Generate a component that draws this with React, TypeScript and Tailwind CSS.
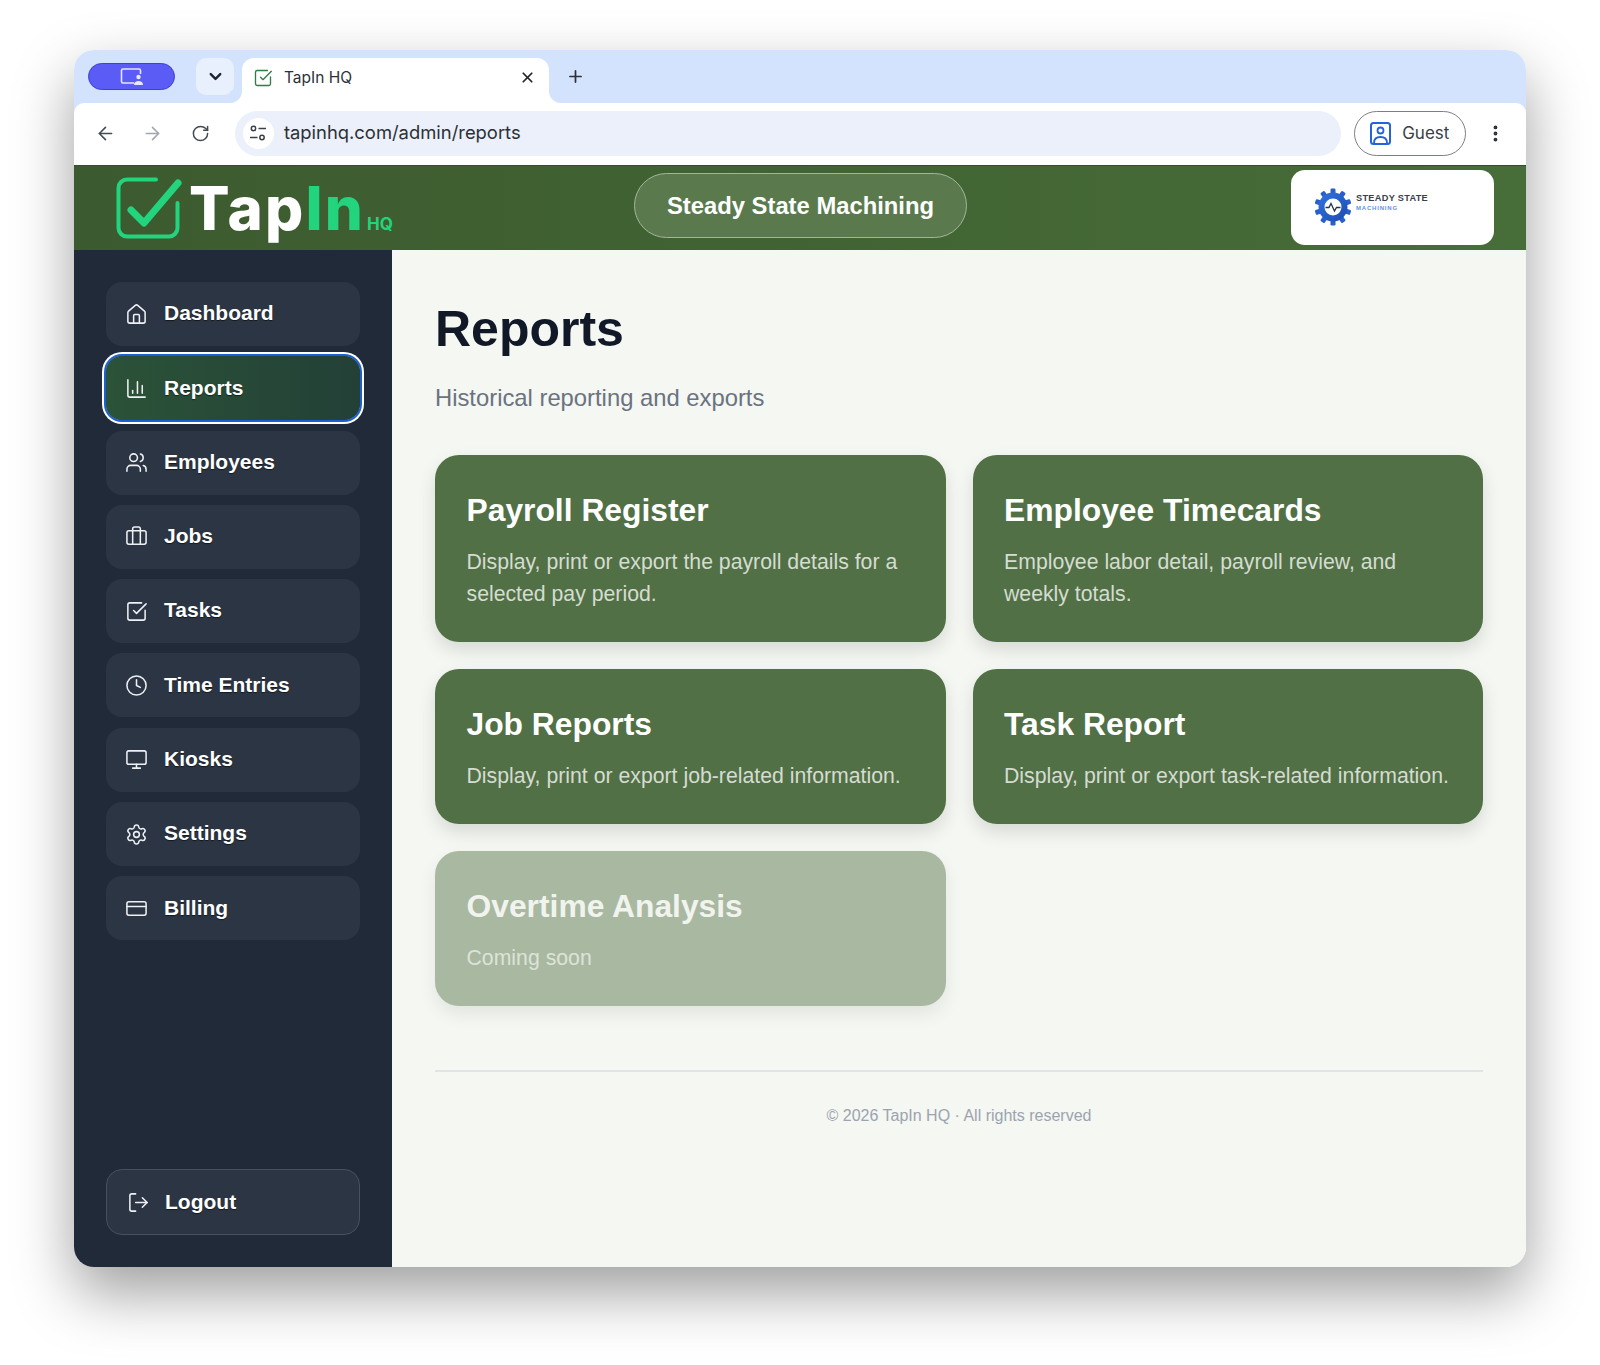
import { ArrowLeft, ArrowRight, Briefcase, ChartColumn, ChevronDown, Clock, CreditCard, EllipsisVertical, House, LogOut, Monitor, Plus, RotateCw, Settings, SquareCheckBig, Users, X } from 'lucide-react'

const navItems = [
  { label: 'Dashboard', icon: House },
  { label: 'Reports', icon: ChartColumn, active: true },
  { label: 'Employees', icon: Users },
  { label: 'Jobs', icon: Briefcase },
  { label: 'Tasks', icon: SquareCheckBig },
  { label: 'Time Entries', icon: Clock },
  { label: 'Kiosks', icon: Monitor },
  { label: 'Settings', icon: Settings },
  { label: 'Billing', icon: CreditCard },
]

const reports = [
  { title: 'Payroll Register', text: 'Display, print or export the payroll details for a selected pay period.' },
  { title: 'Employee Timecards', text: 'Employee labor detail, payroll review, and weekly totals.' },
  { title: 'Job Reports', text: 'Display, print or export job-related information.' },
  { title: 'Task Report', text: 'Display, print or export task-related information.' },
  { title: 'Overtime Analysis', text: 'Coming soon', disabled: true },
]

function TabStrip() {
  return (
    <div className="flex h-[53px] items-end bg-[#d3e3fd] pl-[14px]">
      {/* profile pill */}
      <div className="mb-[13px] flex h-[27px] w-[87px] items-center justify-center rounded-full border border-[#3f3fd0] bg-[#5b5bf6]">
        <svg width="26" height="20" viewBox="0 0 26 20" fill="none" stroke="#e8e8ff" strokeWidth="1.6">
          <path d="M15 16H4a1.5 1.5 0 0 1-1.5-1.5v-11A1.5 1.5 0 0 1 4 2h16a1.5 1.5 0 0 1 1.5 1.5V7" />
          <circle cx="19.5" cy="10" r="2.2" fill="#e8e8ff" stroke="none" />
          <path d="M15 18c0-3 2-4 4.500-4s4.500 1 4.500 4z" fill="#e8e8ff" stroke="none" />
        </svg>
      </div>
      <div className="mb-[8px] ml-[21px] flex h-[37px] w-[38px] items-center justify-center rounded-[10px] bg-[#e8effd]">
        <ChevronDown size={19} strokeWidth={3} className="text-[#1b2433]" />
      </div>
      {/* active tab */}
      <div className="relative ml-[8px] flex h-[45px] w-[307px] items-center rounded-t-[12px] bg-white pb-[6px] pl-[11px] pr-[14px]">
        <span className="absolute bottom-0 left-[-12px] h-3 w-3 bg-white">
          <span className="block h-3 w-3 rounded-br-[12px] bg-[#d3e3fd]" />
        </span>
        <span className="absolute bottom-0 right-[-12px] h-3 w-3 bg-white">
          <span className="block h-3 w-3 rounded-bl-[12px] bg-[#d3e3fd]" />
        </span>
        <SquareCheckBig size={20} strokeWidth={1.6} className="text-[#2f7d44]" />
        <span className="ml-[11px] font-['Inter',sans-serif] text-[15.5px] text-[#2c3138]">TapIn HQ</span>
        <X size={17} strokeWidth={2.4} className="ml-auto mr-[-1px] text-[#20242b]" />
      </div>
      <Plus size={19} strokeWidth={2.2} className="mb-[17px] ml-[17px] text-[#2c3138]" />
    </div>
  )
}

function Toolbar() {
  return (
    <div className="bg-[#d3e3fd]">
      <div className="flex h-[63px] items-center rounded-t-[10px] border-b border-[#3a4a34] bg-white pb-[2px] pl-[21px] pr-[20px]">
        <ArrowLeft size={21} strokeWidth={1.8} className="text-[#444a52]" />
        <ArrowRight size={21} strokeWidth={1.8} className="ml-[26px] text-[#a3a7ad]" />
        <RotateCw size={19} strokeWidth={1.9} className="ml-[28px] text-[#444a52]" />
        <div className="ml-[25px] flex h-[45px] w-[1108px] items-center rounded-full bg-[#ebf0fa] pl-[8px]">
          <div className="flex h-[31px] w-[31px] items-center justify-center rounded-full bg-white">
            <svg width="18" height="18" viewBox="0 0 18 18" fill="none" stroke="#3a4048" strokeWidth="1.5">
              <circle cx="4.500" cy="4.500" r="2.200" />
              <path d="M9.500 4.500H17M1 13.500h7.500" />
              <circle cx="13" cy="13.500" r="2.200" />
            </svg>
          </div>
          <span className="ml-[10px] font-['Inter',sans-serif] text-[18.400px] text-[#2b3036]">tapinhq.com/admin/reports</span>
        </div>
        <div className="ml-[13px] flex h-[45px] w-[112px] items-center rounded-full border border-[#7c7f85] pl-[15px]">
          <svg width="21" height="23" viewBox="0 0 21 23" fill="none">
            <rect x="1" y="1" width="19" height="21" rx="2.500" stroke="#2563d8" strokeWidth="2" />
            <circle cx="10.500" cy="8.500" r="3" stroke="#2563d8" strokeWidth="1.800" />
            <path d="M4 21c0-4.500 3-6 6.500-6s6.500 1.500 6.500 6" stroke="#2563d8" strokeWidth="1.800" />
          </svg>
          <span className="ml-[11px] mt-[2px] font-['Inter',sans-serif] text-[17px] text-[#3b4047]">Guest</span>
        </div>
        <EllipsisVertical size={21} strokeWidth={2.4} className="ml-[19px] text-[#2c3138]" />
      </div>
    </div>
  )
}

function GearLogo() {
  const teeth = [0, 36, 72, 108, 144, 180, 216, 252, 288, 324]
  return (
    <svg width="38" height="38" viewBox="0 0 38 38" fill="none">
      <defs>
        <linearGradient id="gear" x1="0" y1="0" x2="1" y2="1">
          <stop offset="0" stopColor="#2f6fdc" />
          <stop offset="1" stopColor="#1f4fb4" />
        </linearGradient>
      </defs>
      {teeth.map((deg) => (
        <rect key={deg} x="16.500" y="0.500" width="5" height="7" rx="1.200" fill="#2a5fcb" transform={`rotate(${deg} 19 19)`} />
      ))}
      <circle cx="19" cy="19" r="11.500" stroke="url(#gear)" strokeWidth="6" fill="#fff" />
      <path d="M11.500 19.500h3.500l2-4 3.500 7.500 2-3.500h4" stroke="#26324a" strokeWidth="1.300" />
    </svg>
  )
}

function Header() {
  return (
    <header className="relative flex h-[84px] items-center justify-between bg-gradient-to-r from-[#3c5a2f] to-[#476d38] pl-[42px] pr-[32px]">
      <div className="flex items-center">
        <svg width="66" height="62" viewBox="0 0 66 62" fill="none" stroke="#22d47e" strokeLinecap="round" strokeLinejoin="round">
          <path d="M40 2.500H11a8.500 8.500 0 0 0-8.500 8.500v40a8.500 8.500 0 0 0 8.500 8.500h42a8.500 8.500 0 0 0 8.500-8.500V26" strokeWidth="4" />
          <path d="M15 33l13 13L62 6" strokeWidth="7" />
        </svg>
        <div className="ml-[7px] flex items-baseline font-['Inter',sans-serif] text-[60px] font-extrabold leading-none tracking-[2.2px]">
          <span className="text-white">Tap</span>
          <span className="text-[#22d47e]">In</span>
          <span className="ml-[2px] text-[17px] font-bold tracking-normal text-[#22d47e]">HQ</span>
        </div>
      </div>
      <div className="absolute left-[560px] top-[7px] flex h-[65px] w-[333px] items-center justify-center rounded-full border-[1.500px] border-[#a3b69b] bg-[#5a7a4e] font-['Liberation_Sans',sans-serif] text-[23.800px] font-bold text-white">
        Steady State Machining
      </div>
      <div className="mb-[2px] flex h-[75px] w-[203px] items-center rounded-[14px] bg-white pl-[23px]">
        <GearLogo />
        <div className="mb-[9px] ml-[4px] font-['Liberation_Sans',sans-serif]">
          <div className="text-[9.200px] font-bold leading-[11px] tracking-[0.3px] text-[#3a3f4a]">STEADY STATE</div>
          <div className="text-[6px] font-bold leading-[8px] tracking-[0.8px] text-[#6a90e8]">MACHINING</div>
        </div>
      </div>
    </header>
  )
}

function Sidebar() {
  return (
    <aside className="flex w-[318px] shrink-0 flex-col justify-between bg-[#212a38] p-8 font-['Liberation_Sans',sans-serif]">
      <nav className="flex flex-col gap-[10.300px]">
        {navItems.map((item) => (
          <div
            key={item.label}
            className={
              item.active
                ? 'flex h-[64px] items-center rounded-[16px] bg-gradient-to-r from-[#2b5338] to-[#234037] pl-[19px] text-[21px] font-bold text-white shadow-[0_0_0_2px_#1b5fd4,0_0_0_4px_#ffffff]'
                : 'flex h-[64px] items-center rounded-[16px] bg-[#2c3543] pl-[19px] text-[21px] font-bold text-white'
            }
          >
            <item.icon size={23} strokeWidth={1.6} className="shrink-0 text-[#eef0f3]" />
            <span className="mb-[2px] ml-[16px] [text-shadow:0_1px_1px_rgba(0,0,0,0.55)]">{item.label}</span>
          </div>
        ))}
      </nav>
      <div className="flex h-[66px] items-center rounded-[16px] border border-[#465160] bg-[#2c3543] pl-[20px] text-[21px] font-bold text-white">
        <LogOut size={23} strokeWidth={1.6} className="-scale-x-100 rotate-180 text-[#eef0f3]" />
        <span className="mb-[1px] ml-[15px] [text-shadow:0_1px_1px_rgba(0,0,0,0.55)]">Logout</span>
      </div>
    </aside>
  )
}

function ReportCard({ title, text, disabled }: { title: string; text: string; disabled?: boolean }) {
  return (
    <div
      className={
        disabled
          ? 'rounded-[24px] bg-[#a9b8a0] pb-[32px] pl-[31.500px] pr-[24px] pt-[36px] shadow-[0_8px_18px_rgba(0,0,0,0.08)]'
          : 'rounded-[24px] bg-[#517045] pb-[32px] pl-[31.500px] pr-[24px] pt-[36px] shadow-[0_8px_18px_rgba(0,0,0,0.12)]'
      }
    >
      <h3 className={disabled ? 'text-[31.800px] font-bold leading-[38px] text-[#f1f4ee]' : 'text-[31.800px] font-bold leading-[38px] text-white'}>{title}</h3>
      <p className={disabled ? 'mt-[17px] text-[21.250px] leading-[32px] text-[#dde3d8]' : 'mt-[17px] text-[21.250px] leading-[32px] text-[#d5dcd1]'}>{text}</p>
    </div>
  )
}

export default function App() {
  return (
    <div className="h-[1365px] w-[1600px] bg-white px-[74px] pt-[50px]">
      <div className="flex h-[1217px] flex-col overflow-hidden rounded-[20px] shadow-[0_26px_60px_rgba(0,0,0,0.38)]">
        <TabStrip />
        <Toolbar />
        <Header />
        <div className="flex min-h-0 flex-1">
          <Sidebar />
          <main className="flex-1 bg-[#f4f7f2] pl-[43px] pr-[43px] pt-[49px] font-['Liberation_Sans',sans-serif]">
            <h1 className="text-[50px] font-bold leading-[60px] text-[#111827]">Reports</h1>
            <p className="mt-[23px] text-[23.800px] leading-[32px] text-[#6b7280]">Historical reporting and exports</p>
            <div className="mt-[41px] grid grid-cols-2 gap-[27px]">
              {reports.map((report) => (
                <ReportCard key={report.title} {...report} />
              ))}
            </div>
            <div className="mt-[64px] border-t-2 border-[#e0e4e5] pt-[32px] text-center text-[16px] leading-[24px] text-[#9ca3af]">
              © 2026 TapIn HQ · All rights reserved
            </div>
          </main>
        </div>
      </div>
    </div>
  )
}
